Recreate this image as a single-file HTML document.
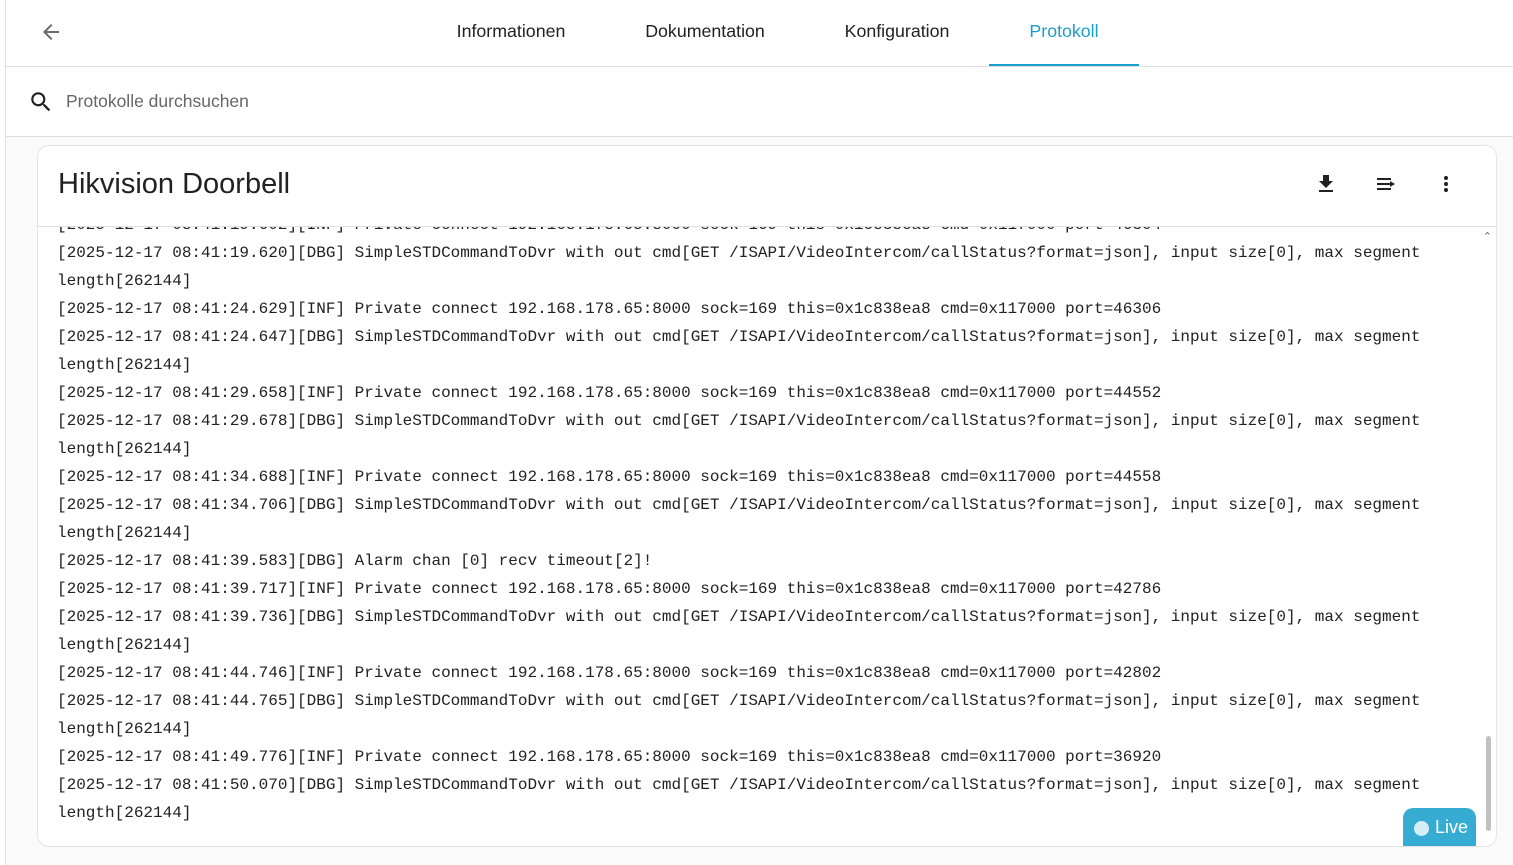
<!DOCTYPE html>
<html><head><meta charset="utf-8"><style>
*{box-sizing:border-box;margin:0;padding:0}
html,body{width:1513px;height:865px;overflow:hidden;background:#fafafa;font-family:"Liberation Sans",Roboto,sans-serif}
.strip{position:absolute;left:0;top:0;width:6px;height:865px;background:#fff;border-right:1px solid #e0e0e0}
.hdr{position:absolute;left:6px;top:0;right:0;height:67px;background:#fff;border-bottom:1px solid #e0e0e0}
.tab{position:absolute;top:21px;font-size:17.8px;color:#212121;transform:translateX(-50%);white-space:nowrap}
.act{color:#1a9fcb}
.ul{position:absolute;left:983px;width:150px;top:64px;height:2px;background:#1a9fcb}
.search{position:absolute;left:6px;top:67px;right:0;height:70px;background:#fff;border-bottom:1px solid #e0e0e0}
.search span{position:absolute;left:60px;top:24px;font-size:17.5px;color:#666}
.card{position:absolute;left:37px;top:145px;width:1460px;height:702px;background:#fff;border:1px solid #e4e4e4;border-radius:12px;overflow:hidden}
.title{position:absolute;left:20px;top:22px;font-size:29px;color:#212121}
.ch{position:absolute;left:0;right:0;top:0;height:81px;border-bottom:1px solid #e0e0e0;background:#fff;z-index:2}
.log{position:absolute;left:19px;top:65px;font-family:"Liberation Mono",monospace;font-size:16px;line-height:28px;color:#212121;white-space:pre}
.sb{position:absolute;right:5px;top:590px;width:5px;height:95px;background:#c1c1c1;border-radius:3px}
.live{position:absolute;left:1403px;top:808px;width:73px;height:38px;background:#36acd3;border-radius:10px 10px 0 0;color:#fff;font-size:18px}
.live i{position:absolute;left:11px;top:13px;width:15px;height:15px;border-radius:50%;background:#d6eef7}
.live b{position:absolute;left:32px;top:9px;font-weight:normal}
</style></head><body>
<div class="strip"></div>
<div class="hdr">
<svg style="position:absolute;left:33px;top:20px" width="24" height="24" viewBox="0 0 24 24"><path d="M20 11H7.83l5.59-5.59L12 4l-8 8 8 8 1.41-1.41L7.83 13H20v-2z" fill="#6b6b6b"/></svg>
<div class="tab" style="left:505px">Informationen</div>
<div class="tab" style="left:699px">Dokumentation</div>
<div class="tab" style="left:891px">Konfiguration</div>
<div class="tab act" style="left:1058px">Protokoll</div>
<div class="ul"></div>
</div>
<div class="search">
<svg style="position:absolute;left:22px;top:22px" width="26" height="26" viewBox="0 0 24 24"><path d="M15.5 14h-.79l-.28-.27A6.47 6.47 0 0 0 16 9.5 6.5 6.5 0 1 0 9.5 16c1.61 0 3.090-.59 4.23-1.57l.27.28v.79l5 4.99L20.49 19l-4.99-5zm-6 0C7.01 14 5 11.99 5 9.5S7.01 5 9.5 5 14 7.01 14 9.5 11.99 14 9.5 14z" fill="#212121"/></svg>
<span>Protokolle durchsuchen</span>
</div>
<div class="card">
<div class="ch">
<div class="title">Hikvision Doorbell</div>
<svg style="position:absolute;left:1276px;top:26px" width="24" height="24" viewBox="0 0 24 24"><path d="M5 20h14v-2H5v2zM19 9h-4V3H9v6H5l7 7 7-7z" fill="#212121"/></svg>
<svg style="position:absolute;left:1336px;top:26px" width="24" height="24" viewBox="0 0 24 24"><path d="M3 6h14v2H3zM3 11h13v2H3zM3 16h14v2H3zM16 9l5 3-5 3z" fill="#212121"/></svg>
<svg style="position:absolute;left:1396px;top:26px" width="24" height="24" viewBox="0 0 24 24"><path d="M12 8a2 2 0 1 0 0-4 2 2 0 0 0 0 4zm0 2a2 2 0 1 0 0 4 2 2 0 0 0 0-4zm0 6a2 2 0 1 0 0 4 2 2 0 0 0 0-4z" fill="#212121"/></svg>
</div>
<div class="log">[2025-12-17 08:41:19.602][INF] Private connect 192.168.178.65:8000 sock=169 this=0x1c838ea8 cmd=0x117000 port=46304
[2025-12-17 08:41:19.620][DBG] SimpleSTDCommandToDvr with out cmd[GET /ISAPI/VideoIntercom/callStatus?format=json], input size[0], max segment
length[262144]
[2025-12-17 08:41:24.629][INF] Private connect 192.168.178.65:8000 sock=169 this=0x1c838ea8 cmd=0x117000 port=46306
[2025-12-17 08:41:24.647][DBG] SimpleSTDCommandToDvr with out cmd[GET /ISAPI/VideoIntercom/callStatus?format=json], input size[0], max segment
length[262144]
[2025-12-17 08:41:29.658][INF] Private connect 192.168.178.65:8000 sock=169 this=0x1c838ea8 cmd=0x117000 port=44552
[2025-12-17 08:41:29.678][DBG] SimpleSTDCommandToDvr with out cmd[GET /ISAPI/VideoIntercom/callStatus?format=json], input size[0], max segment
length[262144]
[2025-12-17 08:41:34.688][INF] Private connect 192.168.178.65:8000 sock=169 this=0x1c838ea8 cmd=0x117000 port=44558
[2025-12-17 08:41:34.706][DBG] SimpleSTDCommandToDvr with out cmd[GET /ISAPI/VideoIntercom/callStatus?format=json], input size[0], max segment
length[262144]
[2025-12-17 08:41:39.583][DBG] Alarm chan [0] recv timeout[2]!
[2025-12-17 08:41:39.717][INF] Private connect 192.168.178.65:8000 sock=169 this=0x1c838ea8 cmd=0x117000 port=42786
[2025-12-17 08:41:39.736][DBG] SimpleSTDCommandToDvr with out cmd[GET /ISAPI/VideoIntercom/callStatus?format=json], input size[0], max segment
length[262144]
[2025-12-17 08:41:44.746][INF] Private connect 192.168.178.65:8000 sock=169 this=0x1c838ea8 cmd=0x117000 port=42802
[2025-12-17 08:41:44.765][DBG] SimpleSTDCommandToDvr with out cmd[GET /ISAPI/VideoIntercom/callStatus?format=json], input size[0], max segment
length[262144]
[2025-12-17 08:41:49.776][INF] Private connect 192.168.178.65:8000 sock=169 this=0x1c838ea8 cmd=0x117000 port=36920
[2025-12-17 08:41:50.070][DBG] SimpleSTDCommandToDvr with out cmd[GET /ISAPI/VideoIntercom/callStatus?format=json], input size[0], max segment
length[262144]</div>
<div style="position:absolute;right:4px;top:84px;font-size:11px;color:#666">&#8963;</div>
<div class="sb"></div>
</div>
<div class="live"><i></i><b>Live</b></div>
</body></html>
